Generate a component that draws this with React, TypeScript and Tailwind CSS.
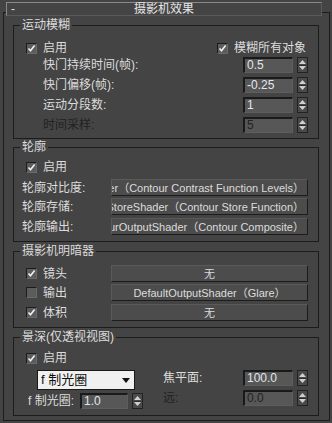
import React from "react";

const font = "font-['Liberation_Sans','Noto_Sans_CJK_SC',sans-serif]";

function Check({ on }: { on: boolean }) {
  return (
    <div className="w-[11px] h-[11px] shrink-0 bg-[#5c5c5c] border border-t-[#1c1c1c] border-l-[#1c1c1c] border-b-[#6a6a6a] border-r-[#6a6a6a] flex items-center justify-center">
      {on && (
        <svg width="9" height="9" viewBox="0 0 9 9">
          <path d="M1.5 4.5 L3.5 6.8 L7.6 1.6" stroke="#f0f0f0" strokeWidth="1.6" fill="none" />
        </svg>
      )}
    </div>
  );
}

function Spinner() {
  return (
    <div className="w-[11px] h-[16px] shrink-0 bg-[#4a4a4a] border border-[#222] flex flex-col items-center justify-between py-[2px]">
      <svg width="7" height="4" viewBox="0 0 7 4">
        <path d="M0 4 L3.5 0 L7 4 Z" fill="#d0d0d0" />
      </svg>
      <div className="w-[7px] h-px bg-[#2a2a2a]" />
      <svg width="7" height="4" viewBox="0 0 7 4">
        <path d="M0 0 L7 0 L3.5 4 Z" fill="#d0d0d0" />
      </svg>
    </div>
  );
}

function Num({ value, off, w = "w-[50px]" }: { value: string; off?: boolean; w?: string }) {
  return (
    <div className={`${w} h-[16px] bg-[#575757] border-t-2 border-l-2 border-[#1a1a1a] border-b border-r border-b-[#5e5e5e] border-r-[#5e5e5e] pl-[2px] text-[12px] leading-[13px] ${off ? "text-[#222]" : "text-[#e2e6ec]"}`}>
      {value}
    </div>
  );
}

function NumSpin({ value, off }: { value: string; off?: boolean }) {
  return (
    <div className="flex items-center gap-[4px]">
      <Num value={value} off={off} />
      <Spinner />
    </div>
  );
}

// long shader names are clipped on the left, like the max ui does
function Btn({ text, right }: { text: string; right?: boolean }) {
  return (
    <div
      className={`w-[197px] h-[17px] bg-[#4c4c4c] border border-t-[#5a5a5a] border-l-[#5a5a5a] border-b-[#1c1c1c] border-r-[#1c1c1c] flex items-center overflow-hidden whitespace-nowrap text-[11px] text-[#dcdcdc] ${right ? "justify-end pr-[3px]" : "justify-center"}`}
    >
      <span className="shrink-0">{text}</span>
    </div>
  );
}

function Group({ title, children, className }: { title: string; children: React.ReactNode; className?: string }) {
  return (
    <fieldset className={`border border-[#1c1c1c] ml-[9px] mr-[10px] px-0 ${className ?? ""}`}>
      <legend className="ml-[6px] px-[2px] text-[12px] leading-[14px] text-[#dcdcdc]">{title}</legend>
      {children}
    </fieldset>
  );
}

function Row({ label, value, off }: { label: string; value: string; off?: boolean }) {
  return (
    <div className="flex items-center h-[16px] pl-[29px] pr-[10px]">
      <span className={off ? "text-[#222]" : ""}>{label}</span>
      <div className="ml-auto">
        <NumSpin value={value} off={off} />
      </div>
    </div>
  );
}

export default function App() {
  return (
    <div className={`w-[332px] h-[423px] bg-[#444444] text-[#dcdcdc] text-[12px] leading-[14px] pt-[2px] overflow-hidden ${font}`}>
      <div className="relative z-10 mx-[6px] mr-[10px] h-[14px] bg-[#444444] border border-t-[#8a8a8a] border-l-[#8a8a8a] border-b-[#5a5a5a] border-r-[#5a5a5a] flex items-center">
        <span className="absolute left-[4px] top-[-1px] text-[12px]">-</span>
        <span className="mx-auto text-[#e6e6e6]">摄影机效果</span>
      </div>
      <div className="-mt-[4px] ml-[3px] mr-[2px] border border-[#1c1c1c] pb-[4px] pt-[5px]">
        <Group title="运动模糊" className="pb-[5px]">
          <div className="flex items-center h-[16px] mt-[8px] pl-[12px] pr-[12px]">
            <Check on />
            <span className="ml-[6px]">启用</span>
            <div className="ml-auto flex items-center">
              <Check on />
              <span className="ml-[6px]">模糊所有对象</span>
            </div>
          </div>
          <div className="mt-[1px]">
            <Row label="快门持续时间(帧):" value="0.5" />
          </div>
          <div className="mt-[4px]">
            <Row label="快门偏移(帧):" value="-0.25" />
          </div>
          <div className="mt-[4px]">
            <Row label="运动分段数:" value="1" />
          </div>
          <div className="mt-[4px]">
            <Row label="时间采样:" value="5" off />
          </div>
        </Group>

        <Group title="轮廓" className="mt-[1px] pb-[6px]">
          <div className="flex items-center h-[16px] mt-[5px] pl-[12px]">
            <Check on />
            <span className="ml-[6px]">启用</span>
          </div>
          <div className="flex items-center mt-[4px] pl-[8px] pr-[10px]">
            <span>轮廓对比度:</span>
            <div className="ml-auto">
              <Btn right text="ContourContrastShader（Contour Contrast Function Levels）" />
            </div>
          </div>
          <div className="flex items-center mt-[2px] pl-[8px] pr-[10px]">
            <span>轮廓存储:</span>
            <div className="ml-auto">
              <Btn right text="ContourStoreShader（Contour Store Function）" />
            </div>
          </div>
          <div className="flex items-center mt-[3px] pl-[8px] pr-[10px]">
            <span>轮廓输出:</span>
            <div className="ml-auto">
              <Btn right text="ContourOutputShader（Contour Composite）" />
            </div>
          </div>
        </Group>

        <Group title="摄影机明暗器" className="mt-[2px] pb-[6px]">
          <div className="flex items-center mt-[7px] pl-[12px] pr-[10px]">
            <Check on />
            <span className="ml-[6px]">镜头</span>
            <div className="ml-auto">
              <Btn text="无" />
            </div>
          </div>
          <div className="flex items-center mt-[2px] pl-[12px] pr-[10px]">
            <Check on={false} />
            <span className="ml-[6px]">输出</span>
            <div className="ml-auto">
              <Btn text="DefaultOutputShader（Glare）" />
            </div>
          </div>
          <div className="flex items-center mt-[3px] pl-[12px] pr-[10px]">
            <Check on />
            <span className="ml-[6px]">体积</span>
            <div className="ml-auto">
              <Btn text="无" />
            </div>
          </div>
        </Group>

        <Group title="景深(仅透视视图)" className="mt-[2px] pb-[6px]">
          <div className="flex items-center h-[16px] mt-[6px] pl-[12px]">
            <Check on />
            <span className="ml-[6px]">启用</span>
          </div>
          <div className="flex mt-[4px]">
            <div className="w-[149px] flex flex-col">
              <div className="ml-[23px] w-[98px] h-[20px] bg-[#f0f0f0] border border-[#1a1a1a] flex items-center pl-[3px] pr-[4px] text-[#111] text-[13px]">
                <span>f 制光圈</span>
                <svg className="ml-auto" width="8" height="5" viewBox="0 0 8 5">
                  <path d="M0 0 L8 0 L4 5 Z" fill="#111" />
                </svg>
              </div>
              <div className="flex items-center mt-[3px] ml-[14px]">
                <span>f 制光圈:</span>
                <div className="ml-[6px] flex items-center gap-[4px]">
                  <Num value="1.0" w="w-[48px]" />
                  <Spinner />
                </div>
              </div>
            </div>
            <div className="flex-1 flex flex-col pr-[10px]">
              <div className="flex items-center h-[16px]">
                <span>焦平面:</span>
                <div className="ml-auto">
                  <NumSpin value="100.0" />
                </div>
              </div>
              <div className="flex items-center h-[16px] mt-[4px]">
                <span className="text-[#222]">远:</span>
                <div className="ml-auto">
                  <NumSpin value="0.0" off />
                </div>
              </div>
            </div>
          </div>
        </Group>
      </div>
    </div>
  );
}
